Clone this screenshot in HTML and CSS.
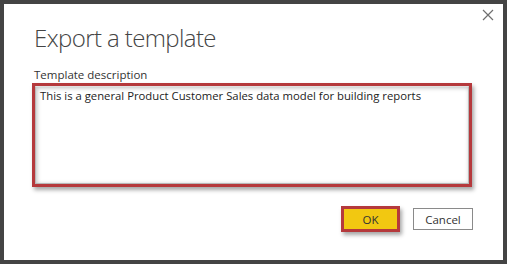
FILE: index.html
```html
<!DOCTYPE html>
<html lang="en">
<head>
	<meta charset="UTF-8">
	<title>Export a template</title>
	<link rel="stylesheet" href="styles.css">
</head>
<body>
	<div class="dialog">
		<button class="close" aria-label="Close">
			<svg width="12" height="12" viewBox="0 0 12 12">
				<path d="M1 1 L11 11 M11 1 L1 11" stroke="#6f6f6f" stroke-width="1.2" fill="none"/>
			</svg>
		</button>
		<h1 class="title">Export a template</h1>
		<label class="label" for="desc">Template description</label>
		<div class="desc-box">
			<div class="desc" id="desc">This is a general Product Customer Sales data model for building reports</div>
		</div>
		<div class="actions">
			<button class="btn btn-ok">OK</button>
			<button class="btn btn-cancel">Cancel</button>
		</div>
	</div>
</body>
</html>
```

FILE: styles.css
```css
*{
	margin: 0;
	padding: 0;
	box-sizing: border-box;
	font-family: 'Open Sans', 'Segoe UI', sans-serif;
}

body{
	width: 507px;
	height: 264px;
	background-color: #444444;
	padding: 4px;
}

.dialog{
	position: relative;
	display: flex;
	flex-direction: column;
	width: 499px;
	height: 256px;
	background-color: white;
	padding: 18px 31px 0 28px;
}

.close{
	position: absolute;
	top: 5px;
	right: 9px;
	width: 12px;
	height: 12px;
	border: none;
	background: none;
	display: flex;
}

.title{
	font-size: 24px;
	font-weight: 300;
	letter-spacing: -0.6px;
	color: #444;
	line-height: 32px;
	margin-left: 2px;
}

.label{
	margin-top: 13px;
	margin-left: 2px;
	font-size: 11.5px;
	color: #333;
	line-height: 16px;
}

.desc-box{
	height: 104px;
	border: 3.5px solid #b5393c;
	box-shadow: 2px 3px 4px rgba(0, 0, 0, 0.35);
}

.desc{
	height: 100%;
	border: 1px solid #b8b8b8;
	border-top-color: #e0e0e0;
	box-shadow: inset 1px 1px 4px rgba(0, 0, 0, 0.25);
	padding: 1px 4px;
	font-size: 11.3px;
	color: #222;
	line-height: 16px;
}

.actions{
	display: flex;
	justify-content: flex-end;
	align-items: center;
	gap: 13px;
	margin-top: 19px;
	margin-right: -1px;
}

.btn{
	font-size: 11.5px;
	color: #333;
	background: white;
}

.btn-ok{
	width: 59px;
	height: 26px;
	background-color: #f2c811;
	border: 3px solid #b5393c;
	box-shadow: 2px 3px 4px rgba(0, 0, 0, 0.35);
}

.btn-cancel{
	width: 60px;
	height: 22px;
	border: 1px solid #8a8a8a;
}
```
